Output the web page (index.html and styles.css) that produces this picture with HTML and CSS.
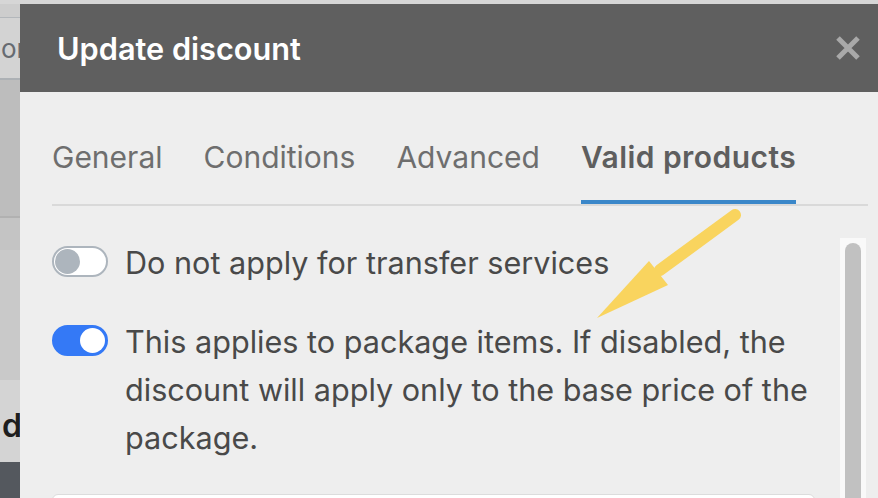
FILE: index.html
```html
<!DOCTYPE html>
<html lang="en">
<head>
    <meta charset="UTF-8">
    <meta name="viewport" content="width=device-width, initial-scale=1.0">
    <title>Update discount</title>
    <link rel="stylesheet" href="styles.css">
</head>
<body>
    <div class="screen">
        <!-- dimmed page behind the modal -->
        <div class="backdrop">
            <div class="bd-top"></div>
            <div class="bd-strip"></div>
            <div class="bd-field"><span>ord</span></div>
            <div class="bd-panel"></div>
            <div class="bd-row"></div>
            <div class="bd-row light"></div>
            <div class="bd-label"><span>d</span></div>
            <div class="bd-footer"></div>
        </div>

        <div class="modal">
            <div class="modal-header">
                <h1>Update discount</h1>
                <svg class="close" width="26" height="26" viewBox="0 0 26 26">
                    <path d="M3 3 L23 23 M23 3 L3 23" stroke="#a9a9a9" stroke-width="5" fill="none"/>
                </svg>
            </div>

            <div class="modal-body">
                <ul class="tabs">
                    <li class="tab">General</li>
                    <li class="tab">Conditions</li>
                    <li class="tab">Advanced</li>
                    <li class="tab active">Valid products</li>
                </ul>

                <div class="panel">
                    <div class="panel-content">
                        <div class="switch-row">
                            <span class="switch"><span class="knob"></span></span>
                            <span class="switch-label">Do not apply for transfer services</span>
                        </div>
                        <div class="switch-row">
                            <span class="switch on"><span class="knob"></span></span>
                            <span class="switch-label">This applies to package items. If disabled, the discount will apply only to the base price of the package.</span>
                        </div>
                        <div class="box"></div>
                    </div>
                    <div class="scroll-track"><div class="scroll-thumb"></div></div>
                </div>
            </div>
        </div>

        <!-- annotation arrow drawn over the screenshot -->
        <svg class="arrow" width="878" height="498" viewBox="0 0 878 498">
            <line x1="735" y1="215" x2="660" y2="270" stroke="#f9d45e" stroke-width="12" stroke-linecap="round"/>
            <polygon points="649,261 668,285 597,318" fill="#f9d45e"/>
        </svg>
    </div>
</body>
</html>
```

FILE: styles.css
```css
body {
    margin: 0;
    font-family: Inter, "Noto Sans", sans-serif;
}
.screen {
    position: relative;
    display: flex;
    width: 878px;
    height: 498px;
    overflow: hidden;
    background: #d6d6d6;
}

/* backdrop strip */
.backdrop {
    width: 20px;
    flex-shrink: 0;
    display: flex;
    flex-direction: column;
    overflow: hidden;
}
.bd-top {
    height: 4px;
    background: #d6d6d6;
}
.bd-strip {
    height: 13px;
    background: #cdcdcd;
}
.bd-field {
    height: 60px;
    background: #d3d3d3;
    border-top: 1px solid #b3b7bb;
    border-bottom: 2px solid #adb1b5;
    display: flex;
    align-items: center;
    font-size: 26px;
    color: #676b71;
    white-space: nowrap;
}
.bd-field span {
    margin-left: 1px;
}
.bd-panel {
    height: 136px;
    background: #bdbdbd;
    border-bottom: 2px solid #b1b1b1;
}
.bd-row {
    height: 32px;
    background: #c4c4c4;
}
.bd-row.light {
    height: 130px;
    background: #c9c9c9;
}
.bd-label {
    height: 82px;
    box-sizing: border-box;
    padding-top: 8px;
    background: #d4d4d4;
    display: flex;
    align-items: center;
    font-size: 32px;
    font-weight: 600;
    color: #1e1e1e;
}
.bd-label span {
    margin-left: 2px;
}
.bd-footer {
    flex: 1;
    background: #54585e;
}

/* modal */
.modal {
    flex: 1;
    margin-top: 4px;
    background: #eeeeee;
    display: flex;
    flex-direction: column;
}
.modal-header {
    height: 88px;
    flex-shrink: 0;
    background: #5f5f5f;
    display: flex;
    align-items: center;
    justify-content: space-between;
    padding: 0 17px 0 37px;
}
.modal-header h1 {
    margin: 0;
    font-size: 30.7px;
    font-weight: 600;
    color: #ffffff;
}
.modal-body {
    padding: 0 10px 0 32px;
}

.tabs {
    display: flex;
    gap: 41px;
    list-style: none;
    margin: 0;
    padding: 47px 0 0 0;
    border-bottom: 2px solid #d9d9d9;
}
.tab {
    font-size: 30px;
    line-height: 36px;
    color: #6e6e6e;
    padding-bottom: 25px;
    border-bottom: 4px solid transparent;
}
.tab.active {
    font-weight: 600;
    color: #5e5e5e;
    letter-spacing: 0.45px;
    border-bottom-color: #3a87c9;
}

.panel {
    display: flex;
}
.panel-content {
    flex: 1;
    padding-top: 33px;
}
.switch-row {
    display: flex;
    align-items: flex-start;
    gap: 17px;
}
.switch-row + .switch-row {
    margin-top: 31px;
}
.switch {
    width: 56px;
    height: 31px;
    box-sizing: border-box;
    flex-shrink: 0;
    margin-top: 7px;
    padding: 1px;
    border: 2px solid #adb5bd;
    border-radius: 16px;
    background: #ffffff;
    display: flex;
    align-items: center;
}
.knob {
    width: 25px;
    height: 25px;
    border-radius: 50%;
    background: #adb5bd;
}
.switch.on {
    justify-content: flex-end;
    background: #3479f6;
    border-color: #3479f6;
}
.switch.on .knob {
    background: #ffffff;
}
.switch-label {
    font-size: 30.6px;
    line-height: 48px;
    color: #494949;
}
.box {
    margin-top: 32px;
    height: 40px;
    background: #ffffff;
    border: 1px solid #dcdcdc;
    border-radius: 6px;
}

.scroll-track {
    width: 26px;
    box-sizing: border-box;
    margin: 32px 2px 0 25px;
    padding: 5px 5px 0;
    background: #f9f9f9;
}
.scroll-thumb {
    height: 400px;
    border-radius: 8px 8px 0 0;
    background: #c1c1c1;
}

.arrow {
    position: absolute;
    left: 0;
    top: 0;
    pointer-events: none;
}
```
